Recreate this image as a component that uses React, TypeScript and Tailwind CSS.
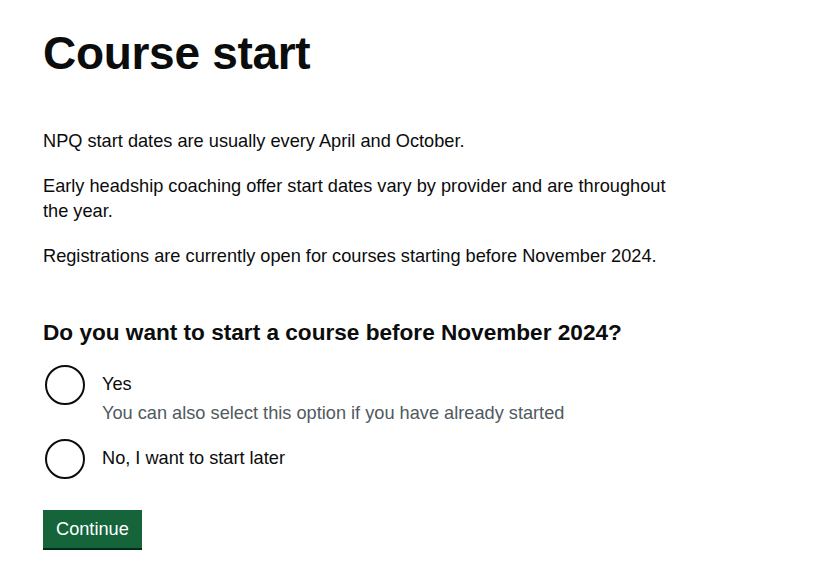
const options = [
  { id: 'yes', label: 'Yes', hint: 'You can also select this option if you have already started' },
  { id: 'no', label: 'No, I want to start later' },
];

export default function App() {
  return (
    <main
      className="min-h-[576px] bg-white px-[43px] pt-[26px] text-[#0b0c0c]"
      style={{ fontFamily: '"Liberation Sans", Arial, sans-serif' }}
    >
      <h1 className="mb-[49px] text-[46px] font-bold leading-[54px] tracking-[-0.3px]">Course start</h1>

      <div className="max-w-[640px] text-[18.2px] leading-[25px]">
        <p className="mb-[20px]">NPQ start dates are usually every April and October.</p>
        <p className="mb-[20px]">
          Early headship coaching offer start dates vary by provider and are throughout the year.
        </p>
        <p>Registrations are currently open for courses starting before November 2024.</p>
      </div>

      <form className="mt-[49px]">
        <fieldset>
          <legend className="mb-[17px] text-[22.6px] font-bold leading-[30px]">
            Do you want to start a course before November 2024?
          </legend>
          <div className="flex flex-col gap-[13px]">
            {options.map((o) => (
              <label key={o.id} className="flex cursor-pointer items-start gap-[17px] pl-[2px]">
                <input type="radio" name="start" value={o.id} className="peer sr-only" />
                <span className="h-[40px] w-[40px] shrink-0 rounded-full border-2 border-[#0b0c0c] bg-white" />
                <span className="pt-[7px]">
                  <span className="block text-[18.2px] leading-[25px]">{o.label}</span>
                  {o.hint && (
                    <span className="mt-[4px] block text-[18.2px] leading-[25px] text-[#505a5f]">{o.hint}</span>
                  )}
                </span>
              </label>
            ))}
          </div>
        </fieldset>

        <button
          type="button"
          className="mt-[31px] h-[38px] rounded-none bg-[#15643a] px-[13px] text-[18.2px] leading-[25px] text-white shadow-[0_2px_0_#002d18]"
        >
          Continue
        </button>
      </form>
    </main>
  );
}
